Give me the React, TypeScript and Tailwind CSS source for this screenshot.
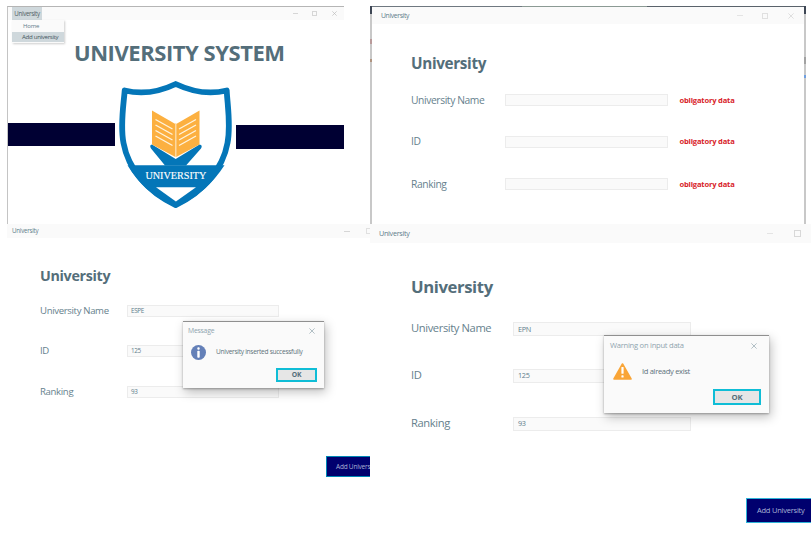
import type { ReactNode } from "react";

type RowProps = {
  label: string;
  value?: string;
  error?: string;
  row: string;
  labelClass: string;
  fieldClass: string;
};

function FieldRow({ label, value, error, row, labelClass, fieldClass }: RowProps) {
  return (
    <div className={`flex items-center whitespace-nowrap ${row}`}>
      <label className={`shrink-0 text-[#66818d] ${labelClass}`}>{label}</label>
      <div className={`flex shrink-0 items-center border border-[#ececec] bg-[#fafafa] text-[#607d8b] ${fieldClass}`}>
        {value}
      </div>
      {error && (
        <span className="ml-[11.500px] pt-px text-[7.600px] font-bold leading-none tracking-[-0.200px] text-[#d8232a]">
          {error}
        </span>
      )}
    </div>
  );
}

function Minimize({ className }: { className: string }) {
  return <span className={`h-px shrink-0 ${className}`} />;
}

function Maximize({ className }: { className: string }) {
  return <span className={`shrink-0 border ${className}`} />;
}

function Close({ className }: { className: string }) {
  return (
    <svg viewBox="0 0 6 6" className={`shrink-0 ${className}`} fill="none" stroke="currentColor" strokeWidth="0.8">
      <path d="M0.4 0.4 5.6 5.6M5.6 0.4 0.4 5.6" />
    </svg>
  );
}

function Shield() {
  return (
    <svg viewBox="0 0 130 145" className="h-[145px] w-[130px]">
      <path
        d="M14.700 20.500Q40 26.500 65.700 14Q92 26.500 116.700 20.500C117.500 36 121 55 117.500 73C113 98 94 122 65.700 135C37 122 18 98 13.500 73C10 55 13.500 36 14.700 20.500Z"
        fill="#fff"
        stroke="#0476b8"
        strokeWidth="5.800"
        strokeLinejoin="round"
      />
      <path d="M17.500 95.200H114.500C103 113 87 128 65.900 137C44 128 28 113 17.500 95.200Z" fill="#0476b8" />
      <path d="M46 117.200H86L65.900 131.500Z" fill="#fff" />
      <path d="M42 74.500 65.700 89 89.500 74.500Q93 75 91 78.500L76 95.500H55L41 78.500Q39 75 42 74.500Z" fill="#0476b8" />
      <path d="M42 40.500 65.400 54V87L42 74.500Z M89.500 40.500 66.200 54V87L89.500 74.500Z" fill="#fcb040" />
      <path d="M65.800 53V87" stroke="#fbd596" strokeWidth="0.9" />
      <path
        d="M45.500 49.500 62.500 59M45.500 55 62.500 64.500M45.500 60.500 62.500 70M45.500 66 62.500 75.500M86 49.500 69 59M86 55 69 64.500M86 60.500 69 70M86 66 69 75.500"
        stroke="#fff3dc"
        strokeWidth="1.400"
      />
      <text
        x="65.900"
        y="109.200"
        textAnchor="middle"
        textLength="61"
        lengthAdjust="spacingAndGlyphs"
        fill="#fff"
        fontSize="10.400"
        fontFamily="'Liberation Serif', serif"
        stroke="#fff"
        strokeWidth="0.150"
      >
        UNIVERSITY
      </text>
    </svg>
  );
}

function HomeWindow() {
  return (
    <section className="flex h-[218px] w-[337px] shrink-0 flex-col border-l border-t border-l-[#c4c4c4] border-t-[#b5b5b5] bg-white">
      <div className="flex h-[13px] shrink-0 items-center bg-[#fafafa] pl-1">
        <div className="relative flex h-[13px] w-[30px] items-center justify-center bg-[#cfd8dc] pt-px text-[6.200px] tracking-[-0.350px] text-[#4f5f66]">
          University
          <div className="absolute left-0 top-[13px] z-10 flex w-[52px] flex-col bg-[#fafafa] pb-px shadow-[1px_1px_2px_rgba(0,0,0,0.2)]">
            <div className="flex h-[12px] items-center pl-[11px] text-[6px] tracking-[-0.200px] text-[#607d8b]">Home</div>
            <div className="flex h-[10px] items-center whitespace-nowrap bg-[#cfd8dc] pl-[10px] text-[6.100px] tracking-[-0.300px] text-[#46565d]">
              Add university
            </div>
          </div>
        </div>
        <Minimize className="ml-auto w-[5px] bg-[#d6d6d6]" />
        <Maximize className="ml-[14px] size-[5px] border-[#d6d6d6]" />
        <Close className="ml-[15px] mr-[7px] size-[5px] text-[#bbbbbb]" />
      </div>
      <h1 className="mt-[18px] flex h-[28px] shrink-0 items-center whitespace-nowrap pl-[66px] text-[22px] font-bold tracking-[-0.450px] text-[#546e7a]">
        UNIVERSITY SYSTEM
      </h1>
      <div className="mt-[3.500px] flex h-[145px] items-start">
        <div className="mt-[53px] h-[23px] w-[107px] shrink-0 bg-[#000033]" />
        <div className="-ml-[5px] -mr-[4px] shrink-0">
          <Shield />
        </div>
        <div className="mt-[55px] h-[24px] flex-1 bg-[#000033]" />
      </div>
    </section>
  );
}

function EmptyFormWindow() {
  const label = "w-[94px] text-[10.300px] tracking-[-0.400px]";
  const field = "h-[12px] w-[163px]";
  return (
    <section className="flex h-[218px] w-[436px] shrink-0 bg-white">
      <div className="flex w-[2px] shrink-0 flex-col bg-[#c8c8c8]">
        <div className="h-[8px] bg-[#3d4654]" />
        <div className="mt-[25px] h-[5px] bg-[#b99a9a]" />
        <div className="mt-[15px] h-[3px] bg-[#b09480]" />
      </div>
      <div className="flex min-w-0 flex-1 flex-col">
        <div className="flex h-px shrink-0">
          <div className="w-[150px] bg-[#6f7880]" />
          <div className="w-[125px] bg-[#8b9a94]" />
          <div className="flex-1 bg-[#5a626b]" />
        </div>
        <div className="flex h-[17px] shrink-0 items-center bg-[#fafafa] pl-[9px] text-[6.800px] tracking-[-0.350px] text-[#607d8b]">
          <span className="pt-px">University</span>
          <Minimize className="ml-auto w-[6px] bg-[#e4e4e4]" />
          <Maximize className="ml-[19px] size-[6px] border-[#e0e0e0]" />
          <Close className="ml-5 mr-[10px] size-[6px] text-[#d8d8d8]" />
        </div>
        <div className="pl-[39px] pt-[29px]">
          <h2 className="flex h-5 items-center pt-px text-[15.300px] font-bold tracking-[-0.350px] text-[#546e7a]">University</h2>
          <FieldRow label="University Name" error="obligatory data" row="mt-5 h-[14px]" labelClass={label} fieldClass={field} />
          <FieldRow label="ID" error="obligatory data" row="mt-[27.500px] h-[14px]" labelClass={label} fieldClass={field} />
          <FieldRow label="Ranking" error="obligatory data" row="mt-[28.500px] h-[14px]" labelClass={label} fieldClass={field} />
        </div>
      </div>
      <div className="flex w-[2px] shrink-0 flex-col bg-[#c8c8c8]">
        <div className="h-[8px] bg-[#3d4654]" />
        <div className="mt-[43px] h-[7px] bg-[#a2a2a2]" />
        <div className="mt-[11px] h-[3px] bg-[#6f9fe0]" />
      </div>
    </section>
  );
}

function InsertedWindow() {
  const label = "w-[87px] text-[9.600px] tracking-[-0.350px]";
  const field = "h-[12px] w-[152px] pl-[3px] pt-px text-[6.300px] tracking-[-0.300px]";
  return (
    <section className="relative flex h-[320px] w-[363px] shrink-0 flex-col overflow-hidden bg-white">
      <div className="flex h-[14px] shrink-0 items-center bg-[#fafafa] pl-[5px] text-[6.200px] tracking-[-0.240px] text-[#607d8b]">
        <span>University</span>
        <Minimize className="ml-auto w-[6px] bg-[#d6d6d6]" />
        <Maximize className="-mr-[2px] ml-[16px] size-[6px] border-[#e0e0e0]" />
      </div>
      <div className="pl-[33px] pt-[28px]">
        <h2 className="flex h-5 items-center text-[14.300px] font-bold tracking-[-0.320px] text-[#546e7a]">University</h2>
        <FieldRow label="University Name" value="ESPE" row="mt-[18px] h-[14px]" labelClass={label} fieldClass={field} />
        <FieldRow label="ID" value="125" row="mt-[26px] h-[14px]" labelClass={label} fieldClass={field} />
        <FieldRow label="Ranking" value="93" row="mt-[27px] h-[14px]" labelClass={label} fieldClass={field} />
      </div>
      <button className="-mr-px ml-auto mt-[57px] flex h-[21px] w-[45px] shrink-0 items-center whitespace-nowrap border border-r-0 border-[#0087b5] bg-[#00006e] pl-[9px] pt-px text-[6.500px] tracking-[-0.220px] text-[#a9b4d6]">
        Add University
      </button>
      <Dialog
        className="left-[176px] top-[97px] h-[67px] w-[141px]"
        titleClass="h-[17px] pl-[5px] pr-[9px] pt-px text-[6.800px] tracking-[-0.200px]"
        bodyClass="h-[27px] pl-2 text-[6.600px] tracking-[-0.290px]"
        buttonClass="mr-[7px] mt-[2px] h-[14px] w-[41px] text-[6.800px]"
        title="Message"
        message={<span className="pl-[10px]">University inserted successfully</span>}
        icon={
          <svg viewBox="0 0 15 15" className="size-[15px] shrink-0">
            <circle cx="7.5" cy="7.5" r="7.5" fill="#6480b8" />
            <rect x="6.300" y="2.300" width="2.400" height="2.400" rx="1" fill="#fff" />
            <rect x="6.300" y="5.700" width="2.400" height="7" rx="0.800" fill="#fff" />
          </svg>
        }
      />
    </section>
  );
}

function DuplicateWindow() {
  const label = "w-[102px] pb-[2px] text-[11.200px] tracking-[-0.400px]";
  const field = "h-[14px] w-[178px] pl-1 pt-px text-[7.300px] tracking-[-0.350px]";
  return (
    <section className="relative flex h-[320px] w-[441px] shrink-0 flex-col overflow-hidden bg-white">
      <div className="flex h-[19px] shrink-0 items-center bg-[#fafafa] pl-[9px] text-[7.200px] tracking-[-0.280px] text-[#607d8b]">
        <span className="pt-px">University</span>
        <Minimize className="ml-auto w-[6px] bg-[#e4e4e4]" />
        <Maximize className="ml-[21px] mr-[10px] size-[7px] border-[#d8d8d8]" />
      </div>
      <div className="pl-[41px] pt-[34px]">
        <h2 className="flex h-5 items-center text-[16.700px] font-bold tracking-[-0.400px] text-[#546e7a]">University</h2>
        <FieldRow label="University Name" value="EPN" row="mt-[24px] h-4" labelClass={label} fieldClass={field} />
        <FieldRow label="ID" value="125" row="mt-[30.500px] h-4" labelClass={label} fieldClass={field} />
        <FieldRow label="Ranking" value="93" row="mt-8 h-4" labelClass={label} fieldClass={field} />
      </div>
      <button className="ml-auto mt-[66.500px] flex h-[25px] w-[65px] shrink-0 items-center whitespace-nowrap border border-r-0 border-[#2fb4d8] bg-[#00006e] pl-[10px] pt-px text-[7.500px] tracking-[-0.230px] text-[#a9b4d6]">
        Add University
      </button>
      <Dialog
        className="left-[234px] top-[111px] h-[78px] w-[165px]"
        titleClass="h-[19px] pl-[6px] pr-[12px] text-[7.600px] tracking-[-0.260px]"
        bodyClass="h-[33px] pl-[9px] text-[7.600px] tracking-[-0.340px]"
        buttonClass="mr-2 mt-px h-4 w-[48px] pt-px text-[7.700px]"
        title="Warning on input data"
        message={<span className="pl-[10px]">Id already exist</span>}
        icon={
          <svg viewBox="0 0 19 17" className="h-[17px] w-[19px] shrink-0">
            <path d="M9.500 1 18 16H1Z" fill="#f9a537" stroke="#f9a537" strokeWidth="1.600" strokeLinejoin="round" />
            <rect x="8.400" y="4" width="2.200" height="6.800" rx="0.600" fill="#fff" />
            <rect x="8.400" y="12.300" width="2.200" height="2.200" rx="0.600" fill="#fff" />
          </svg>
        }
      />
    </section>
  );
}

type DialogProps = {
  className: string;
  titleClass: string;
  bodyClass: string;
  buttonClass: string;
  title: string;
  message: ReactNode;
  icon: ReactNode;
};

function Dialog({ className, titleClass, bodyClass, buttonClass, title, message, icon }: DialogProps) {
  return (
    <div
      role="dialog"
      className={`absolute flex flex-col border-t border-[#8f8f8f] bg-[#fafafa] shadow-[0_1px_2px_rgba(0,0,0,0.300),2px_4px_10px_rgba(0,0,0,0.250)] ${className}`}
    >
      <div className={`flex shrink-0 items-center justify-between whitespace-nowrap text-[#8fa4ae] ${titleClass}`}>
        {title}
        <Close className="size-[6px] text-[#9fb0b8]" />
      </div>
      <div className={`flex shrink-0 items-center whitespace-nowrap text-[#60727b] ${bodyClass}`}>
        {icon}
        {message}
      </div>
      <button
        className={`ml-auto flex shrink-0 items-center justify-center border-2 border-[#0fbdd6] bg-[#e6e6e6] font-bold tracking-[-0.200px] text-[#546e7a] ${buttonClass}`}
      >
        OK
      </button>
    </div>
  );
}

export default function App() {
  return (
    <main className="flex h-[544px] w-[811px] flex-col overflow-hidden bg-white font-['Open_Sans','Noto_Sans',sans-serif] leading-none">
      <div className="flex h-[224px] shrink-0 gap-[26px] pl-[7px] pt-[6px]">
        <HomeWindow />
        <EmptyFormWindow />
      </div>
      <div className="flex h-[320px] shrink-0 pl-[7px]">
        <InsertedWindow />
        <DuplicateWindow />
      </div>
    </main>
  );
}
